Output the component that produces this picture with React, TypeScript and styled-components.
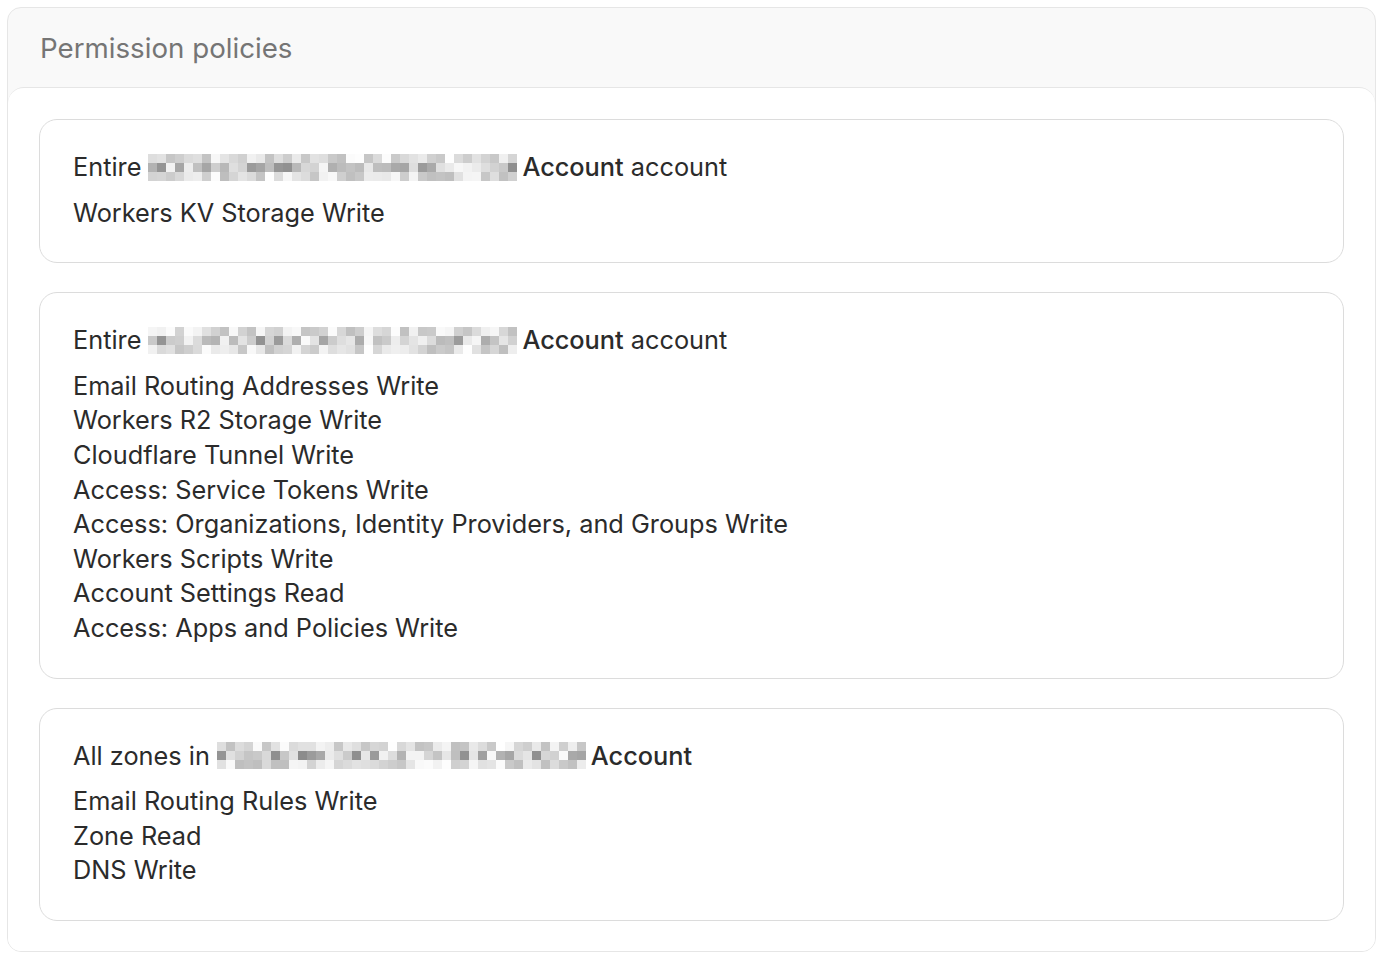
import React from "react";
import styled, { createGlobalStyle } from "styled-components";

const Global = createGlobalStyle`
  body { margin: 0; background: #fff; font-family: Inter, "Noto Sans", sans-serif; }
`;

const Page = styled.div`
  padding: 7px 24px 16px 7px;
`;

const Card = styled.section`
  background: #f9f9f9;
  border: 1px solid #e6e6e6;
  border-radius: 14px;
  overflow: hidden;
`;

const Header = styled.h2`
  margin: 0;
  height: 79px;
  display: flex;
  align-items: center;
  padding-left: 32px;
  font-size: 27.7px;
  font-weight: 400;
  color: #757575;
`;

const Body = styled.div`
  background: #fff;
  border-top: 1px solid #e6e6e6;
  border-radius: 16px 16px 0 0;
  padding: 31px 31px 30px 31px;
  display: flex;
  flex-direction: column;
  gap: 29px;
`;

const Policy = styled.div`
  border: 1.5px solid #dcdcdc;
  border-radius: 18px;
  padding: 30px 33px 32px;
  color: #2b2b2b;
  font-size: 25.3px;
  line-height: 34.6px;
`;

const Title = styled.div`
  display: flex;
  align-items: center;
  margin-bottom: 11px;
  white-space: pre;
`;

const Strong = styled.span`
  font-weight: 500;
`;

const Blur = styled.span<{ $w: number }>`
  display: inline-grid;
  grid-template-columns: repeat(${(p) => Math.round(p.$w / 9)}, 9px);
  grid-auto-rows: 9px;
  margin: 0 5px 0 7px;
  height: 27px;
  overflow: hidden;
`;

const Cell = styled.span``;

function Redacted({ w, seed }: { w: number; seed: number }) {
  const cols = Math.round(w / 9);
  const cells = [] as React.ReactNode[];
  let s = seed;
  for (let i = 0; i < cols * 3; i++) {
    s = (s * 9301 + 49297) % 233280;
    const r = s / 233280;
    const row = Math.floor(i / cols);
    const v = row === 1 ? 140 + r * 110 : 190 + r * 65;
    const c = Math.round(Math.min(v, 255));
    cells.push(<Cell key={i} style={{ background: `rgb(${c},${c},${c})` }} />);
  }
  return <Blur $w={w}>{cells}</Blur>;
}

const Item = styled.div``;

const policies = [
  {
    pre: "Entire",
    post: (
      <>
        <Strong>Account</Strong> account
      </>
    ),
    w: 366,
    seed: 7,
    items: ["Workers KV Storage Write"],
  },
  {
    pre: "Entire",
    post: (
      <>
        <Strong>Account</Strong> account
      </>
    ),
    w: 366,
    seed: 91,
    items: [
      "Email Routing Addresses Write",
      "Workers R2 Storage Write",
      "Cloudflare Tunnel Write",
      "Access: Service Tokens Write",
      "Access: Organizations, Identity Providers, and Groups Write",
      "Workers Scripts Write",
      "Account Settings Read",
      "Access: Apps and Policies Write",
    ],
  },
  {
    pre: "All zones in",
    post: <Strong>Account</Strong>,
    w: 366,
    seed: 333,
    items: ["Email Routing Rules Write", "Zone Read", "DNS Write"],
  },
];

export default function App() {
  return (
    <Page>
      <Global />
      <Card>
        <Header>Permission policies</Header>
        <Body>
          {policies.map((p, i) => (
            <Policy key={i}>
              <Title>
                {p.pre}
                <Redacted w={p.w} seed={p.seed} />
                <span>{p.post}</span>
              </Title>
              {p.items.map((t) => (
                <Item key={t}>{t}</Item>
              ))}
            </Policy>
          ))}
        </Body>
      </Card>
    </Page>
  );
}
